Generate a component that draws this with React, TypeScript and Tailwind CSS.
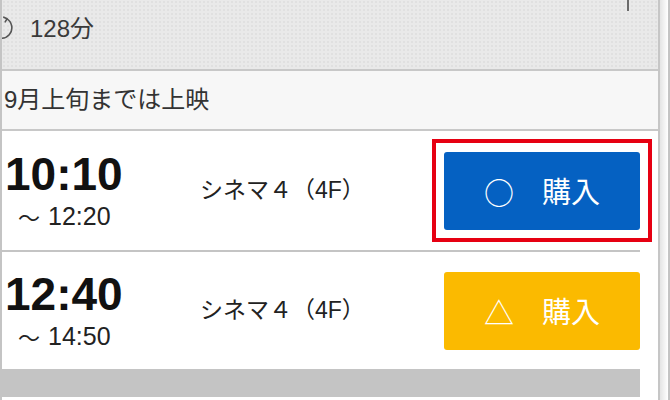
import React from 'react';

type Showing = {
  start: string;
  end: string;
  screen: string;
  mark: string;
  color: string;
  height: string;
};

const showings: Showing[] = [
  { start: '10:10', end: '12:20', screen: 'シネマ４（4F）', mark: '○', color: 'bg-[#0561c2]', height: 'h-[121px]' },
  { start: '12:40', end: '14:50', screen: 'シネマ４（4F）', mark: '△', color: 'bg-[#fbba00]', height: 'h-[119px]' },
];

function ClockIcon() {
  return (
    <svg width="26" height="26" viewBox="0 0 26 26" fill="none" className="ml-[-13px] shrink-0">
      <path
        d="M17.5 3.6 A10.5 10.5 0 1 1 8 3.2"
        stroke="#555"
        strokeWidth="1.6"
        strokeLinecap="round"
      />
      <path d="M14.8 2.2 L18 3.8 L16.2 6.8" stroke="#555" strokeWidth="1.6" strokeLinecap="round" strokeLinejoin="round" />
    </svg>
  );
}

function ShowingRow({ s }: { s: Showing }) {
  return (
    <div className={`flex ${s.height} shrink-0 items-center border-b-2 border-[#c4c4c4] bg-white`}>
      <div className="w-[198px] pl-[3px] text-[#111]">
        <div className="text-[46px] font-bold leading-[46px]">{s.start}</div>
        <div className="mt-[5px] flex items-center pl-[13px] text-[25px] leading-[28px] text-[#222]">
          <span className="font-['Noto_Sans_CJK_JP',sans-serif] text-[22px]">〜</span>
          <span className="ml-[8px]">{s.end}</span>
        </div>
      </div>
      <div className="flex-1 text-[23px] leading-none text-[#222]">{s.screen}</div>
      <button
        className={`flex h-[78px] w-[196px] items-center justify-center gap-[28px] rounded-[3px] ${s.color} text-white`}
      >
        <span className="font-['Noto_Sans_CJK_JP',sans-serif] text-[30px] leading-none">{s.mark}</span>
        <span className="font-['Noto_Sans_CJK_JP',sans-serif] text-[29px] leading-none">購入</span>
      </button>
    </div>
  );
}

export default function App() {
  return (
    <div className="relative flex h-[400px] w-[670px] overflow-hidden border-x-2 border-[#c4c4c4] bg-white font-['Liberation_Sans','Noto_Sans_CJK_JP',sans-serif]">
      <div className="flex w-[658px] flex-col border-r-2 border-[#c6c6c6]">
        {/* 上映時間 */}
        <div className="flex h-[71px] shrink-0 items-start overflow-hidden border-b-2 border-[#c8c8c8] bg-[#e9e9e9] bg-[radial-gradient(#e0e0e0_0.8px,transparent_0.8px)] bg-[size:4px_4px] pt-[15px]">
          <ClockIcon />
          <span className="ml-[15px] mt-[2px] text-[24px] leading-none text-[#3a3a3a]">128分</span>
        </div>
        <div className="flex h-[60px] shrink-0 items-center border-b-2 border-[#c8c8c8] bg-[#f7f7f7] pl-[2px]">
          <span className="text-[24px] leading-none text-[#333]">9月上旬までは上映</span>
        </div>
        <div className="flex flex-1 flex-col bg-white pb-[3px] pr-[18px]">
          {showings.map((s) => (
            <ShowingRow key={s.start} s={s} />
          ))}
          <div className="flex-1 bg-[#c4c4c4]" />
        </div>
      </div>
      <div className="w-[8px] bg-gradient-to-r from-[#e4e4e4] to-white" />

      <div className="pointer-events-none absolute left-[625px] top-0 h-[11px] w-[2px] bg-[#6b6b6b]" />
      <div className="pointer-events-none absolute left-[430px] top-[139px] h-[103px] w-[220px] border-4 border-[#e60012]" />
    </div>
  );
}
